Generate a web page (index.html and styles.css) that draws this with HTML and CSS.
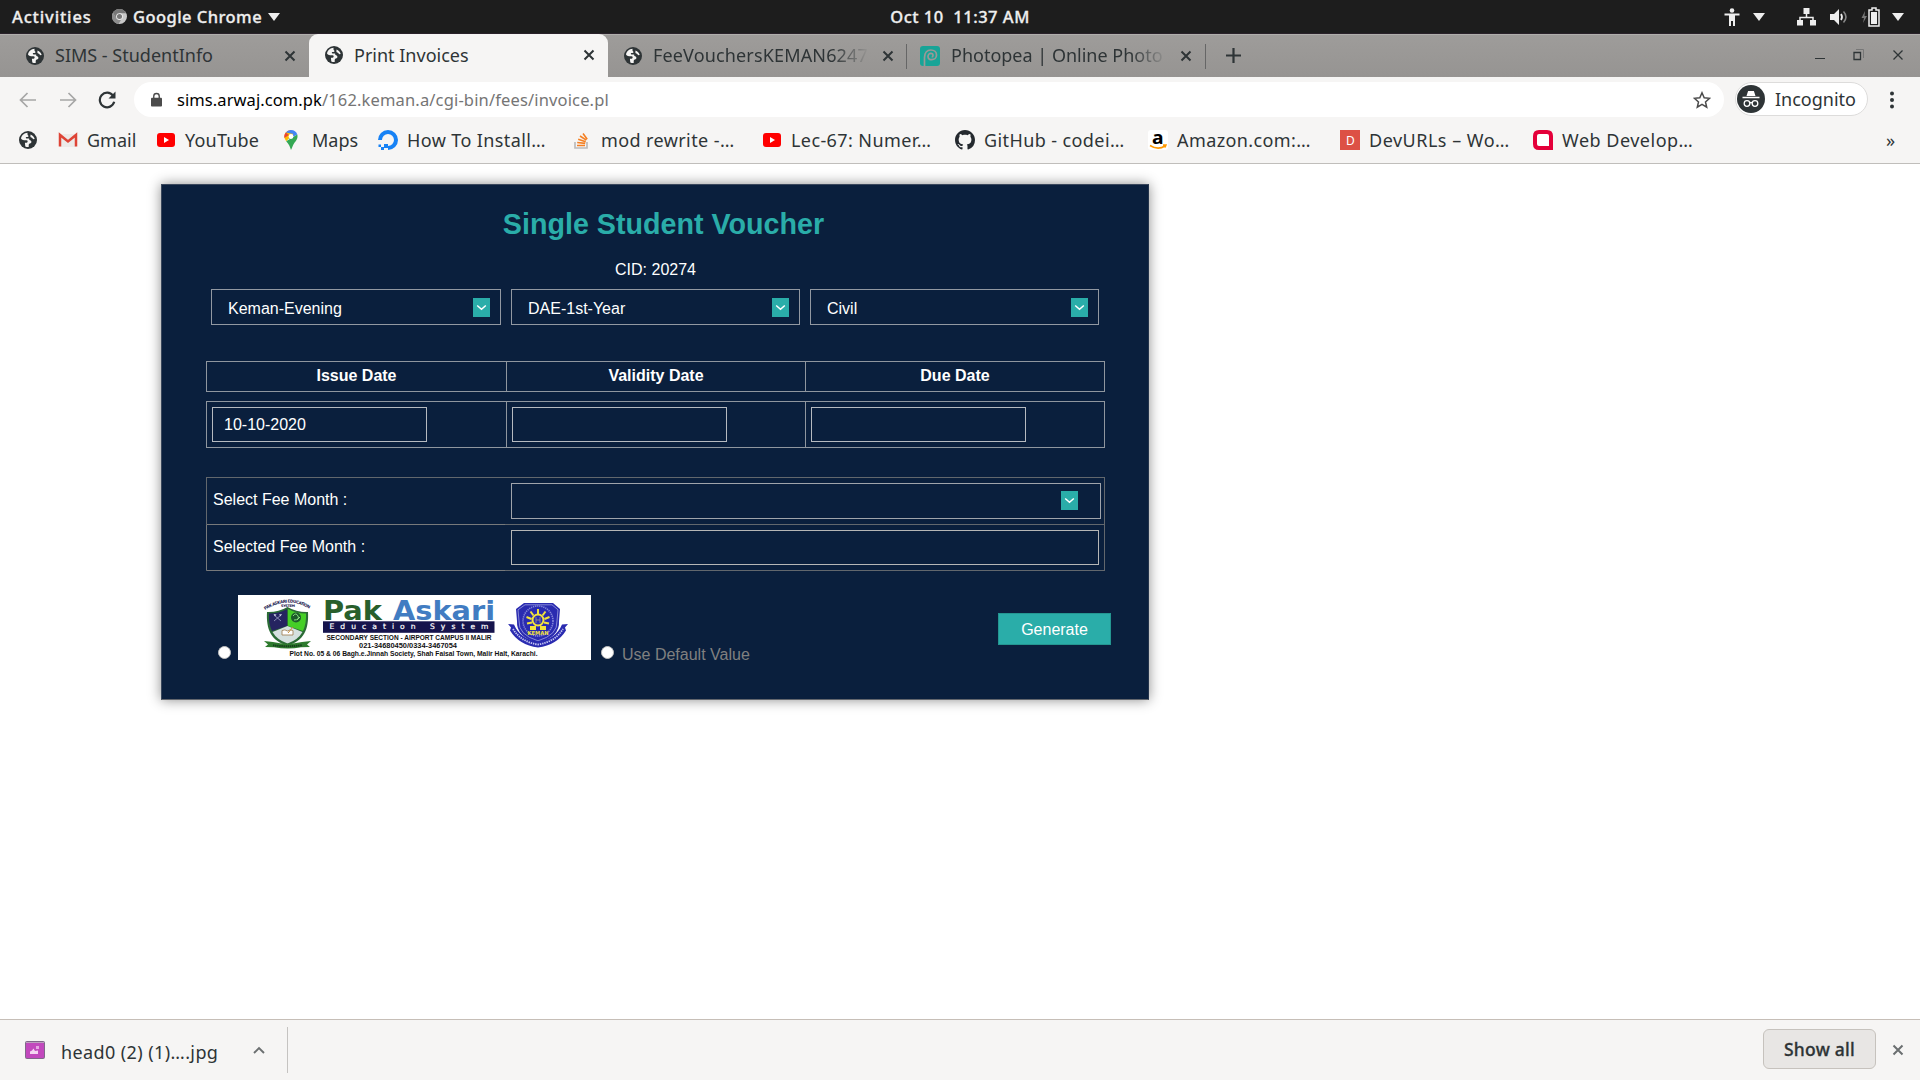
FILE: index.html
```html
<!DOCTYPE html>
<html lang="en">
<head>
<meta charset="utf-8">
<title>Print Invoices</title>
<link rel="stylesheet" href="styles.css">
</head>
<body>
<svg class="defs" width="0" height="0">
  <symbol id="globe" viewBox="0 0 18 18">
    <circle cx="9" cy="9" r="9" fill="#2e3436"/>
    <path d="M8.5 1.8C5.3 2 2.6 4.300 2 7.500c.8 1.100 1.700 1.700 3 1.700h2.600c1 0 1.300.9.9 1.700-.5.9-1.500.8-2.600.8l.4 3.700c1 .5 2.300.6 3.400.5V14c0-1.600 1.900-1.300 2.600-2.500.5-1-.3-2-1.300-2.300-.9-.2-1-1-.8-1.600H7.600c-1 0-1-1.200-.3-1.500.8-.3 1.900.1 2.200-.8.200-.8-.9-1-1-1.800z" fill="#f6f5f4"/>
    <path d="M11.500 3.400c2 .8 3.700 2.500 4.200 4.600-.9.300-1.900.1-2.300-.7-.4-.9-1.800-.6-2-1.600-.1-.8.200-1.600.1-2.300z" fill="#f6f5f4"/>
  </symbol>
  <symbol id="cross" viewBox="0 0 12 12"><path d="M1.500 1.500l9 9M10.500 1.500l-9 9" stroke="currentColor" stroke-width="2" fill="none"/></symbol>
  <symbol id="tri" viewBox="0 0 12 8"><path d="M0 0h12L6 8z" fill="#eee"/></symbol>
  <symbol id="tube" viewBox="0 0 20 20"><rect x="1" y="3" width="18" height="14" rx="3" fill="#f00"/><path d="M8 7v6l5-3z" fill="#fff"/></symbol>
  <symbol id="chev" viewBox="0 0 17 19"><rect width="17" height="19" fill="#2aada9"/><path d="M4.200 7.500l4.300 3.800 4.300-3.800" fill="none" stroke="#fff" stroke-width="1.500"/></symbol>
</svg>

<header class="topbar">
  <div class="top-left">
    <span class="activities">Activities</span>
    <svg class="chrome" viewBox="0 0 16 16"><circle cx="8" cy="8" r="8" fill="#c8c8c8"/><path d="M8 0a8 8 0 0 0-7 4l3.800 6.500L8 4.500h7A8 8 0 0 0 8 0z" fill="#777"/><path d="M1 4a8 8 0 0 0 6 12l3-5-5-1z" fill="#8d8d8d"/><circle cx="8" cy="8" r="3.600" fill="#eee"/><circle cx="8" cy="8" r="2.700" fill="#777"/></svg>
    <span class="appname">Google Chrome</span>
    <svg class="tri"><use href="#tri"/></svg>
  </div>
  <div class="clock">Oct 10&nbsp; 11:37 AM</div>
  <div class="top-right">
    <svg width="16" height="18" viewBox="0 0 16 18"><circle cx="8" cy="2.500" r="2.300" fill="#eee"/><path d="M.5 5.500h15v2H11V18H9v-5H7v5H5V7.500H.5z" fill="#eee"/></svg>
    <svg class="tri t1"><use href="#tri"/></svg>
    <svg class="net" width="19" height="18" viewBox="0 0 19 18"><path d="M6.500 0h6v6h-6zM0 12h6v5.500H0zM13 12h6v5.500h-6z" fill="#eee"/><path d="M9.500 5v4.500M3 12V9.500h13V12" fill="none" stroke="#eee" stroke-width="1.500"/></svg>
    <svg class="vol" width="18" height="18" viewBox="0 0 18 18"><path d="M0 6h4l5-5v16l-5-5H0z" fill="#eee"/><path d="M11 6q2 3 0 6" stroke="#eee" stroke-width="1.800" fill="none"/><path d="M13.500 3.500q5 5.500 0 11" stroke="#888" stroke-width="1.500" fill="none"/></svg>
    <svg class="bat" width="19" height="20" viewBox="0 0 19 20"><path d="M4 4L.5 11H3l-1 5 4-7H3.500z" fill="#777"/><path d="M8 3h3V1h4v2h3v16H8z" fill="none" stroke="#eee" stroke-width="1.500"/><path d="M10 5h6v12h-6z" fill="#eee"/></svg>
    <svg class="tri t2"><use href="#tri"/></svg>
  </div>
</header>

<nav class="tabs">
  <div class="tab first"><svg class="fav"><use href="#globe"/></svg><span class="tab-title l1">SIMS - StudentInfo</span><svg class="x"><use href="#cross"/></svg></div>
  <div class="tab active"><svg class="fav"><use href="#globe"/></svg><span class="tab-title l2">Print Invoices</span><svg class="x"><use href="#cross"/></svg></div>
  <div class="tab third"><svg class="fav"><use href="#globe"/></svg><span class="tab-title fade l3">FeeVouchersKEMAN6247.pdf</span><svg class="x"><use href="#cross"/></svg></div>
  <i class="sep"></i>
  <div class="tab fourth"><svg class="pea" viewBox="0 0 20 20"><rect width="20" height="20" rx="3" fill="#18a497"/><path d="M4.500 20v-8.500C4.500 7 7 4 10.800 4c3.500 0 5.700 2.300 5.700 5 0 3-2.200 4.700-4.700 4.700-2.300 0-3.800-1.400-3.800-3.300 0-1.800 1.300-3 2.800-3 1.300 0 2.200.9 2.200 2 0 .9-.6 1.400-1.300 1.400" fill="none" stroke="#9a9896" stroke-width="1.700"/></svg><span class="tab-title fade l4">Photopea | Online Photo Editor</span><svg class="x"><use href="#cross"/></svg></div>
  <i class="sep"></i>
  <svg class="plus" viewBox="0 0 15 15"><path d="M7.500 0v15M0 7.500h15" stroke="#2e3436" stroke-width="2.200"/></svg>
  <div class="winctl">
    <svg width="10" height="12" viewBox="0 0 10 12"><path d="M0 9.500h10" stroke="#2e3436"/></svg>
    <svg width="11" height="12" viewBox="0 0 11 12"><path d="M3 .5h7.500V9" fill="none" stroke="#777"/><path d="M1 3.500h6.500v7H1z" fill="none" stroke="#2e3436" stroke-width="1.300"/></svg>
    <svg width="12" height="12" viewBox="0 0 12 12"><path d="M1.500 1.500l9 9M10.500 1.500l-9 9" stroke="#2e3436" stroke-width="1.300"/></svg>
  </div>
</nav>

<div class="toolbar">
  <svg class="arr" viewBox="0 0 17 16"><path d="M17 8H1.500M8.500 1L1.500 8l7 7" fill="none" stroke="#a6a6a5" stroke-width="1.700"/></svg>
  <svg class="arr fwd" viewBox="0 0 17 16"><path d="M0 8h15.500M8.500 1l7 7-7 7" fill="none" stroke="#a6a6a5" stroke-width="1.700"/></svg>
  <svg class="reload" viewBox="0 0 18 18"><path d="M15 4.600A7.300 7.300 0 1 0 16.200 10.800" fill="none" stroke="#2e3436" stroke-width="2.200"/><path d="M17.500.5v7h-7z" fill="#2e3436"/></svg>
  <div class="address">
    <svg class="lock" viewBox="0 0 12 15"><path d="M1 5.500h10q1 0 1 1V14q0 1-1 1H1q-1 0-1-1V6.500q0-1 1-1z" fill="#4b4b4b"/><path d="M3 6V4a3 3 0 0 1 6 0v2" fill="none" stroke="#4b4b4b" stroke-width="1.500"/></svg>
    <span class="url"><span class="host">sims.arwaj.com.pk</span><span class="path">/162.keman.a/cgi-bin/fees/invoice.pl</span></span>
    <svg class="star" viewBox="0 0 18 18"><path d="M9 1.800l2.200 5 5.400.5-4.100 3.600 1.200 5.300L9 13.400l-4.700 2.800 1.200-5.300L1.400 7.300l5.400-.5z" fill="none" stroke="#4b4b4b" stroke-width="1.500"/></svg>
  </div>
  <div class="incog">
    <svg viewBox="0 0 28 28"><circle cx="14" cy="14" r="14" fill="#2e3436"/><path d="M9.500 11l1.600-5h5.800l1.600 5zM5.500 11.800h17v1.500h-17z" fill="#fff"/><g fill="none" stroke="#fff" stroke-width="1.300"><circle cx="10" cy="18.500" r="2.800"/><circle cx="18" cy="18.500" r="2.800"/><path d="M12.800 18q1.200-1 2.400 0"/></g></svg>
    <span>Incognito</span>
  </div>
  <svg class="dots" viewBox="0 0 4 18"><g fill="#2e3436"><circle cx="2" cy="2.500" r="2"/><circle cx="2" cy="9" r="2"/><circle cx="2" cy="15.500" r="2"/></g></svg>
</div>

<div class="bookmarks">
  <div class="bm"><svg class="gl" viewBox="0 0 18 18"><use href="#globe"/></svg></div>
  <div class="bm b1"><svg viewBox="0 0 20 20"><path d="M2 4h16v13H2z" fill="#eceae8"/><path d="M2 16.500V5l8 6.500L18 5v11.500" fill="none" stroke="#de4436" stroke-width="2.500"/></svg><span>Gmail</span></div>
  <div class="bm b2"><svg viewBox="0 0 20 20"><use href="#tube"/></svg><span>YouTube</span></div>
  <div class="bm b3"><svg viewBox="0 0 20 20"><path d="M8 0a6.700 6.700 0 0 0-5.200 2.500L6 6z" fill="#ea4335"/><path d="M8 0a6.700 6.700 0 0 1 6.300 4.500L6 9 2.800 2.500A6.700 6.700 0 0 1 8 0z" fill="#4285f4"/><path d="M2.800 2.500C.6 5.400 1 8 3.200 11.200L10.500 4z" fill="#fbbc04"/><path d="M2.800 2.500l3 2.600-4.400 3C1 6 1.500 4 2.800 2.500z" fill="#ea4335"/><path d="M14.300 4.500c1 4-1.500 6.500-3 8.500-1.600 2.300-2 4.500-3.300 7-1-3.500-2-5.500-4.800-8.800z" fill="#34a853"/><circle cx="8" cy="6.500" r="2.400" fill="#fff"/></svg><span>Maps</span></div>
  <div class="bm long b4"><svg viewBox="0 0 20 20"><path d="M10 18a8 8 0 1 0-8-8" fill="none" stroke="#1782f5" stroke-width="4"/><path d="M6 14h4v4H6zM3 17h3v3H3zM.5 14.500H3V17H.5z" fill="#1782f5"/></svg><span>How To Install…</span></div>
  <div class="bm long b5"><svg viewBox="0 0 20 20"><path d="M3 12v6h12v-6" fill="none" stroke="#bcbbbb" stroke-width="1.700"/><path d="M5 15.500h8M5.200 12.500l8 .9M6.200 9.300l7.500 2.500M8 6l6.300 4.200M11 3.500l4.200 5.800" stroke="#f48024" stroke-width="1.600"/></svg><span>mod rewrite -…</span></div>
  <div class="bm long b6"><svg viewBox="0 0 20 20"><use href="#tube"/></svg><span>Lec-67: Numer…</span></div>
  <div class="bm long b7"><svg viewBox="0 0 16 16"><path fill="#24292e" d="M8 0C3.580 0 0 3.580 0 8c0 3.540 2.290 6.530 5.470 7.590.4.070.55-.17.55-.38 0-.19-.01-.82-.01-1.490-2.010.37-2.530-.49-2.690-.94-.09-.23-.48-.94-.82-1.130-.28-.15-.68-.52-.01-.53.63-.01 1.080.58 1.230.82.720 1.210 1.870.87 2.330.66.070-.52.28-.87.51-1.070-1.780-.2-3.640-.89-3.640-3.950 0-.87.31-1.590.82-2.150-.08-.2-.36-1.020.08-2.120 0 0 .67-.21 2.200.82.640-.18 1.320-.27 2-.27s1.360.09 2 .27c1.530-1.040 2.200-.82 2.200-.82.440 1.100.16 1.920.08 2.120.51.56.82 1.270.82 2.150 0 3.070-1.870 3.750-3.650 3.950.29.25.54.73.54 1.480 0 1.070-.01 1.930-.01 2.200 0 .21.15.46.55.38A8.010 8.010 0 0 0 16 8c0-4.420-3.580-8-8-8z"/></svg><span>GitHub - codei…</span></div>
  <div class="bm long b8"><svg viewBox="0 0 20 20"><rect width="20" height="20" rx="3" fill="#fff"/><text x="4" y="13.500" font-family="Noto Sans, sans-serif" font-weight="bold" font-size="18" textLength="12" lengthAdjust="spacingAndGlyphs">a</text><path d="M2 15.500q8 5 15 .5M15 15h3l-1 2.500" fill="none" stroke="#f90" stroke-width="1.500"/></svg><span>Amazon.com:…</span></div>
  <div class="bm long b9"><svg viewBox="0 0 20 20"><rect width="20" height="20" fill="#dd5145"/><text x="6" y="14.500" fill="#fff" font-family="Noto Sans, sans-serif" font-size="12">D</text></svg><span>DevURLs – Wo…</span></div>
  <div class="bm long b10"><svg viewBox="0 0 20 20"><path d="M6 2h8q4 0 4 4v12H6q-4 0-4-4V6q0-4 4-4z" fill="#fff" stroke="#e4003a" stroke-width="4"/><path d="M12 20l4-4 4 4z" fill="#e4003a"/></svg><span>Web Develop…</span></div>
  <div class="bm more">»</div>
</div>

<main class="page">
  <section class="card">
    <h1>Single Student Voucher</h1>
    <p class="cid">CID: 20274</p>
    <div class="selects">
      <div class="select">Keman-Evening<svg><use href="#chev"/></svg></div>
      <div class="select">DAE-1st-Year<svg><use href="#chev"/></svg></div>
      <div class="select">Civil<svg><use href="#chev"/></svg></div>
    </div>
    <div class="dates heads"><div>Issue Date</div><div>Validity Date</div><div>Due Date</div></div>
    <div class="dates inputs"><div><span class="field">10-10-2020</span></div><div><span class="field"></span></div><div><span class="field"></span></div></div>
    <div class="months">
      <div class="mrow"><label>Select Fee Month :</label><div class="mselect"><svg><use href="#chev"/></svg></div></div>
      <div class="mrow low"><label>Selected Fee Month :</label><div class="minput"></div></div>
    </div>
    <div class="bottom">
      <i class="radio"></i>
      <svg class="banner" viewBox="0 0 353 65" font-family="DejaVu Sans, sans-serif">
        <rect width="353" height="65" fill="#fff"/>
        <path id="arc" d="M27 15Q50 .5 73 14.500" fill="none"/>
        <text font-size="4.200" font-weight="bold" fill="#222052"><textPath href="#arc" textLength="47">PAK ASKARI EDUCATION</textPath></text>
        <text x="43" y="12.300" font-size="3.500" font-weight="bold" fill="#222052" textLength="14">SYSTEM</text>
        <path d="M29 17q11 .5 20.500-5Q59 17.500 70 17c1 17-4 29-20.500 33.500C33 46 28 34 29 17z" fill="#2b6b36"/>
        <path d="M31 18.500q10 0 18-4.500v17L34 36q-3.500-7-3-17.500z" fill="#252460"/>
        <path d="M50 14q9 4.700 18 4.500.5 10-3 17.500l-15-5z" fill="#45cf27"/>
        <path d="M34.500 37l15-6 15 6Q60 45 49.500 48.500 39 45 34.500 37z" fill="#d5e0df"/>
        <circle cx="58" cy="22.500" r="5" fill="#1c5a2a"/><path d="M55 21q3-4 5 0t-4 4M59 25l3-3" stroke="#8ade7e" fill="none"/>
        <path d="M36 20l7 6M43 20l-7 6" stroke="#9fa5c8" stroke-width=".8"/><path d="M35.500 19l3 .5-1.500 2zM44 19l-3 .5 1.500 2z" fill="#c9cde0"/>
        <path d="M44 35.500q3-1.500 5.500.5 2.500-2 5.500-.5v4.500H44z" fill="#fff" stroke="#a2845c" stroke-width=".9"/><path d="M50 38l5-6" stroke="#c78b35"/>
        <path d="M26 46l9 1q14 3.500 29 0l9-1-4 3.500 3 2.500-9 .3q-13 2.500-27 0L27 52l3-2.500z" fill="#2d7a2d"/>
        <path d="M35 50.200q14 2 29 0" fill="none" stroke="#15401b" stroke-width="2" stroke-dasharray="1.500 .6"/>
        <text x="85" y="25" font-size="27" font-weight="bold" fill="#285f2c" textLength="59" lengthAdjust="spacingAndGlyphs">Pak</text>
        <text x="155" y="25" font-size="27" font-weight="bold" fill="#417cc2" textLength="102" lengthAdjust="spacingAndGlyphs">Askari</text>
        <rect x="85" y="26.300" width="171.500" height="11.500" fill="#16144c"/>
        <text x="91.500" y="34.300" font-size="7.600" fill="#fff" stroke="#fff" stroke-width=".2" textLength="159">Education System</text>
        <g font-family="Liberation Sans, sans-serif" font-weight="bold" fill="#111">
          <text x="88.500" y="45" font-size="6.400" textLength="165" lengthAdjust="spacingAndGlyphs">SECONDARY SECTION - AIRPORT CAMPUS II MALIR</text>
          <text x="121" y="52.600" font-size="6.400" textLength="98" lengthAdjust="spacingAndGlyphs">021-34680450/0334-3467054</text>
          <text x="51.500" y="60.800" font-size="6.600" textLength="248" lengthAdjust="spacingAndGlyphs">Plot No. 05 &amp; 06 Bagh.e.Jinnah Society, Shah Faisal Town, Malir Halt, Karachi.</text>
        </g>
        <path d="M286 8h29l7 6-1 12q1 16-21 22-22-6-21-22l-1-12z" fill="#2a2bb0"/>
        <path d="M287 9.800h27l6 5-1 11q1 14-19 20-20-6-19-20l-1-11z" fill="none" stroke="#aeb0e6" stroke-width=".7"/>
        <circle cx="300" cy="26" r="15" fill="none" stroke="#8486d8" stroke-width="1.600" stroke-dasharray="1.300 .8"/>
        <g stroke="#f2e33c" stroke-width="2"><path d="M300 14v5M292.500 16.500l3 4M307.500 16.500l-3 4M288.500 22l5 2M311.500 22l-5 2M289 28.500l5-1M311 28.500l-5-1"/></g>
        <circle cx="300" cy="25" r="5.500" fill="none" stroke="#f2e33c" stroke-width="2"/><path d="M298 22v6M302 22v6M298 25h4" stroke="#b0ae72" stroke-width=".7"/>
        <path d="M292 35v-4h4l2-1v5zM302 35v-5l2 1h4v4z" fill="#f2e33c"/>
        <text x="289.500" y="40" font-size="5.600" font-weight="bold" fill="#f2e33c" textLength="21" lengthAdjust="spacingAndGlyphs">KEMAN</text>
        <path d="M270 29l6 .5Q282 44 300 46.500 318 44 324 29.500l6-.5-3 3.500 1 3Q319 50 300 52.500 281 50 272 35.500l1-3z" fill="#2a2bb0"/>
        <path d="M275 34q8 13 25 15.500Q317 47 325 34" fill="none" stroke="#c5c6f2" stroke-width="1.800" stroke-dasharray="1.400 .9"/>
      </svg>
      <i class="radio r2"></i>
      <span class="default">Use Default Value</span>
      <button class="generate">Generate</button>
    </div>
  </section>
</main>

<footer class="downloads">
  <svg class="file" viewBox="0 0 20 18"><rect width="20" height="18" rx="2" fill="#80688a"/><rect x="1" y="2" width="18" height="15" rx="1" fill="#c248bd"/><path d="M1 1h18v1H1z" fill="#bda0c0"/><path d="M5 13V10.500l2-1 1.500-2L10 10l3-.5V13z" fill="#f4d5f2"/><path d="M11 5h3v3h-3z" fill="#e6a6e3"/></svg>
  <span class="fname">head0 (2) (1)….jpg</span>
  <svg class="up" viewBox="0 0 12 8"><path d="M1 7l5-5 5 5" fill="none" stroke="#6b6f70" stroke-width="1.900"/></svg>
  <i class="dsep"></i>
  <button class="showall">Show all</button>
  <svg class="dx"><use href="#cross"/></svg>
</footer>
</body>
</html>
```
FILE: styles.css
```css
* { box-sizing: border-box; }
body { margin: 0; width: 1920px; height: 1080px; overflow: hidden; display: flex; flex-direction: column; background: #fff; font-family: "Noto Sans", sans-serif; font-size: 18px; color: #2e3436; }
svg { display: block; flex: none; }
.defs { width: 0; height: 0; position: absolute; }
span { white-space: nowrap; }

.topbar { height: 34px; flex: none; background: #1d1d1d; display: grid; grid-template-columns: 1fr auto 1fr; align-items: center; color: #eee; font-size: 16.500px; font-weight: 500; border-bottom: 1px solid #2a222a; -webkit-text-stroke: .3px #eee; }
.top-left { display: flex; align-items: center; padding-left: 12px; }
.activities { width: 100px; letter-spacing: .85px; }
.chrome { width: 15px; height: 15px; }
.appname { width: 135px; margin-left: 6px; letter-spacing: .45px; }
.clock { letter-spacing: .5px; }
.tri { width: 12px; height: 8px; }
.top-right { display: flex; align-items: center; justify-content: flex-end; padding-right: 16px; }
.t1 { margin-left: 13px; }
.net { margin-left: 32px; }
.vol { margin-left: 14px; }
.bat { margin-left: 13px; }
.t2 { margin-left: 12px; }

.tabs { height: 43px; flex: none; background: linear-gradient(#9e9c9a, #969492); border-top: 1px solid #b0aeac; display: flex; align-items: center; }
.tab { height: 100%; padding-bottom: 1px; display: flex; align-items: center; }
.first { width: 309px; padding-left: 26px; background: linear-gradient(#9e9c9a, #969492); }
.active { width: 299px; height: 43px; margin-top: -1px; padding-left: 16px; background: #f6f5f4; border-radius: 9px 9px 0 0; }
.third { width: 298px; padding-left: 16px; }
.fourth { width: 298px; padding-left: 13px; }
.fav { width: 18px; height: 18px; margin-right: 11px; }
.pea { width: 20px; height: 20px; margin-right: 11px; }
.tab-title { width: 216px; overflow: hidden; padding-bottom: 1px; }
.first .tab-title, .active .tab-title { width: 229px; }
.l3 { letter-spacing: .15px; }
.fade { -webkit-mask-image: linear-gradient(90deg, #000 83%, transparent); mask-image: linear-gradient(90deg, #000 83%, transparent); }
.x { width: 12px; height: 12px; margin-left: 13px; color: #2e3436; }
.first .x, .active .x { margin-left: 0; }
.sep { width: 1px; height: 25px; background: #666; flex: none; }
.plus { width: 15px; height: 15px; margin: 0 0 1px 20px; }
.winctl { margin-left: auto; padding: 0 16px 2px 0; display: flex; gap: 28px; align-items: center; }

.toolbar { height: 45px; flex: none; background: #f6f5f4; display: flex; align-items: center; padding-left: 19px; }
.arr { width: 17px; height: 16px; }
.fwd { margin-left: 24px; }
.reload { width: 18px; height: 18px; margin-left: 21px; }
.address { width: 1590px; height: 35px; margin-left: 18px; padding: 0 13px 0 17px; background: #fff; border-radius: 18px; display: flex; align-items: center; }
.lock { width: 11px; height: 15px; }
.url { flex: 1; margin-left: 15px; font-size: 16.500px; color: #757575; letter-spacing: .15px; }
.host { color: #000; letter-spacing: .08px; }
.star { width: 18px; height: 18px; }
.incog { width: 133px; height: 34px; margin: 0 0 1px 11px; padding-left: 1px; background: #fff; border: 1px solid #dddcdb; border-radius: 17px; display: flex; align-items: center; }
.incog svg { width: 28px; height: 28px; margin-right: 10px; }
.incog span { margin-bottom: 1px; }
.dots { width: 4px; height: 18px; margin-left: 22px; }

.bookmarks { height: 42px; flex: none; background: #f6f5f4; border-bottom: 1px solid #c0bebb; display: grid; grid-template-columns: 39px 98px 127px 95px 194px 190px 193px 193px 192px 193px 353px 1fr; padding: 0 0 5px 19px; align-items: center; }
.bm { display: flex; align-items: center; gap: 9px; }
.bm svg { width: 20px; height: 20px; }
.bm .gl { width: 18px; height: 18px; }
.b2 span { letter-spacing: .2px; }
.long { letter-spacing: .4px; }
.long.b9, .long.b10 { letter-spacing: .5px; }

.page { flex: 1; padding: 20px 0 0 161px; }
.card { width: 988px; height: 516px; background: #0a1f3d; box-shadow: 0 0 12px rgba(0,0,0,.45); border: 1px solid #3a475c; border-right-color: #24344c; border-bottom-color: #63666d; padding: 0 43px 0 44px; color: #fff; font-family: "Liberation Sans", Arial, sans-serif; font-size: 16px; display: flex; flex-direction: column; }
h1 { margin: 23px 0 0 16px; text-align: center; font-size: 28.700px; line-height: 32px; color: #2aada9; }
.cid { margin: 21px 0 0; line-height: 18px; text-align: center; }
.selects { display: flex; gap: 10px; margin: 10px 0 0 5px; }
.select { width: 290px; height: 36px; border: 1px solid #9298a2; padding: 3px 10px 0 16px; display: flex; align-items: center; justify-content: space-between; }
.select + .select { width: 289px; }
.select svg, .mselect svg { width: 17px; height: 19px; margin-top: -3px; }
.dates { width: 899px; display: grid; grid-template-columns: 299px 299px 299px; border: 1px solid #8f969f; }
.dates > div { border-left: 1px solid #8f969f; }
.dates > div:first-child { border-left: 0; }
.heads { margin-top: 36px; height: 31px; font-weight: bold; text-align: center; line-height: 28px; }
.inputs { margin-top: 9px; height: 47px; }
.inputs > div { padding: 5px 0 0 5px; }
.field { display: block; width: 215px; height: 35px; border: 1px solid #b6bac0; padding-left: 11px; line-height: 34px; }
.months { width: 899px; margin-top: 29px; border: 1px solid #62676d; height: 94px; }
.mrow { height: 46px; display: flex; }
.mrow label { width: 298px; padding: 13px 0 0 6px; line-height: 18px; }
.low { height: 47px; border-top: 1px solid #62676d; }
.low label { box-shadow: -1px 0 #77797b, 0 -1px #77797b, 0 1px #77797b; margin-bottom: 1px; }
.mselect { margin: 5px 0 0 6px; width: 590px; height: 36px; border: 1px solid #a0a4ab; display: flex; justify-content: flex-end; align-items: center; padding: 2px 22px 0 0; }
.minput { margin: 5px 0 0 6px; width: 588px; height: 35px; border: 1px solid #b6b6b6; }
.bottom { display: flex; align-items: flex-start; margin-top: 24px; padding-left: 12px; }
.radio { width: 13px; height: 13px; flex: none; border-radius: 50%; background: #fff; border: 1px solid #c2c2c2; margin-top: 51px; }
.banner { width: 353px; height: 65px; margin-left: 7px; }
.r2 { margin-left: 10px; }
.default { margin: 51px 0 0 8px; color: #808080; line-height: 18px; width: 376px; flex: none; }
.generate { width: 113px; height: 32px; margin: 18px 0 0; padding: 1px 0 0; flex: none; border: 1px solid #249691; background: #2aada9; color: #fff; font: 16px "Liberation Sans", Arial, sans-serif; }

.downloads { height: 61px; flex: none; background: #f6f5f4; border-top: 1px solid #c6beb7; display: flex; align-items: center; padding-left: 25px; }
.file { width: 20px; height: 18px; margin-bottom: 1px; }
.fname { width: 192px; margin: 4px 0 0 16px; letter-spacing: .4px; }
.up { width: 12px; height: 8px; }
.dsep { width: 1px; height: 46px; background: #c5c3c1; margin-left: 22px; }
.showall { width: 113px; height: 40px; margin: 0 0 2px 1475px; padding: 0 0 1px; flex: none; background: #e8e6e4; border: 1px solid #c6c2bd; border-radius: 6px; font: 500 17.500px "Noto Sans", sans-serif; letter-spacing: .25px; color: #2e3436; -webkit-text-stroke: .3px #2e3436; }
.dx { width: 12px; height: 12px; margin: 0 0 1px 16px; color: #6b6f70; }
```
